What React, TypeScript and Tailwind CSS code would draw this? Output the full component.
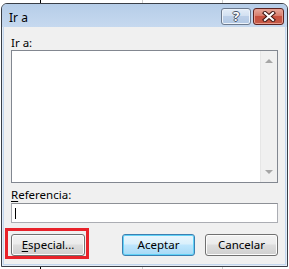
import type { ReactNode } from "react";

const btnFace =
  "bg-[linear-gradient(#f2f2f2_0%,#ebebeb_45%,#dddddd_50%,#cfcfcf_100%)] shadow-[inset_0_0_0_1px_#fcfcfc]";

const DlgButton = ({ children, def = false, w = "w-[73px]" }: { children: ReactNode; def?: boolean; w?: string }) => (
  <div
    className={`${w} h-[22px] rounded-[3px] border flex items-center justify-center text-[11.5px] text-black ${
      def
        ? "border-[#3c7fb1] bg-[linear-gradient(#eaf6fd_0%,#d9f0fc_45%,#bee6fd_50%,#a7d9f5_100%)] shadow-[inset_0_0_0_1px_#62d2f7]"
        : `border-[#707070] ${btnFace}`
    }`}
  >
    {children}
  </div>
);

const TitleButtons = () => (
  <div className="flex gap-[2px] mt-[4px]">
    <div className="w-[30px] h-[17px] rounded-[3px] border border-[#6d7a8d] bg-[linear-gradient(#e4edf8_0%,#d2e0f1_45%,#bccfe8_50%,#b2c8e4_100%)] shadow-[inset_0_0_0_1px_#edf3fa] flex items-center justify-center">
      <span className="text-[13px] font-bold leading-none text-white [text-shadow:1px_0_0_#4a5566,-1px_0_0_#4a5566,0_1px_0_#4a5566,0_-1px_0_#4a5566]">
        ?
      </span>
    </div>
    <div className="w-[31px] h-[17px] rounded-[3px] border border-[#5b2320] bg-[linear-gradient(#e9a99c_0%,#d77d6c_45%,#c7503e_50%,#c55a48_100%)] shadow-[inset_0_0_0_1px_#e69c8e] flex items-center justify-center">
      <svg width="14" height="11" viewBox="0 0 14 11">
        <path d="M3 2 L11 9 M11 2 L3 9" stroke="#3d1512" strokeWidth="4.2" strokeLinecap="square" />
        <path d="M3 2 L11 9 M11 2 L3 9" stroke="#ffffff" strokeWidth="2.2" strokeLinecap="square" />
      </svg>
    </div>
  </div>
);

export default function App() {
  return (
    <div className="relative w-[289px] h-[269px] bg-white overflow-hidden font-['Segoe_UI','Noto_Sans',sans-serif]">
      {/* hoja de cálculo detrás del diálogo */}
      <div className="absolute left-[40px] top-0 h-full w-px bg-black" />
      <div className="absolute left-[142px] top-0 h-full w-px bg-[#cfcfcf]" />
      <div className="absolute left-[222px] top-0 h-full w-px bg-[#cfcfcf]" />

      {/* ventana */}
      <div className="absolute left-[1px] top-[3px] w-[287px] h-[264px] flex flex-col rounded-t-[6px] border border-[#3a3f47] bg-[#c4d7ee] px-[2px] pb-[2px] shadow-[inset_0_0_0_1px_#e2ecf7]">
        <div className="h-[23px] -mx-[2px] flex justify-between pl-[7px] pr-[3px] bg-[linear-gradient(#b6cde8,#c6d9ef)] rounded-t-[5px]">
          <span className="text-[12px] text-black leading-none mt-[8px]">Ir a</span>
          <TitleButtons />
        </div>

        <div className="flex-1 bg-[#f0f0f0] px-[7px] pt-[8px] flex flex-col text-[11.5px] text-black">
          <div className="h-[15px] leading-[15px]">Ir a:</div>
          <div className="h-[133px] border border-[#828790] bg-white flex justify-end">
            <div className="w-[17px] h-full bg-[#f0f0f0] border-l border-[#e6e6e6] flex flex-col justify-between items-center py-[8px]">
              <div className="w-0 h-0 border-x-[4px] border-x-transparent border-b-[4px] border-b-[#a6a6a6]" />
              <div className="w-0 h-0 border-x-[4px] border-x-transparent border-t-[4px] border-t-[#a6a6a6]" />
            </div>
          </div>

          <div className="h-[16px] leading-[16px] mt-[4px]">
            <span className="underline underline-offset-2">R</span>eferencia:
          </div>
          <div className="h-[20px] border border-[#abadb3] border-t-[#8d9096] bg-white flex items-center pl-[3px]">
            <div className="w-px h-[11px] bg-black" />
          </div>

          <div className="flex items-center mt-[11px]">
            <div className="relative">
              <DlgButton w="w-[74px]">
                <span className="underline underline-offset-2">E</span>special...
              </DlgButton>
              <div className="absolute -left-[6px] -top-[6px] -right-[4px] -bottom-[3px] border-[3px] border-[#e8222a]" />
            </div>
            <div className="ml-[37px]">
              <DlgButton def>Aceptar</DlgButton>
            </div>
            <div className="ml-[10px]">
              <DlgButton>Cancelar</DlgButton>
            </div>
          </div>
        </div>
      </div>
    </div>
  );
}
